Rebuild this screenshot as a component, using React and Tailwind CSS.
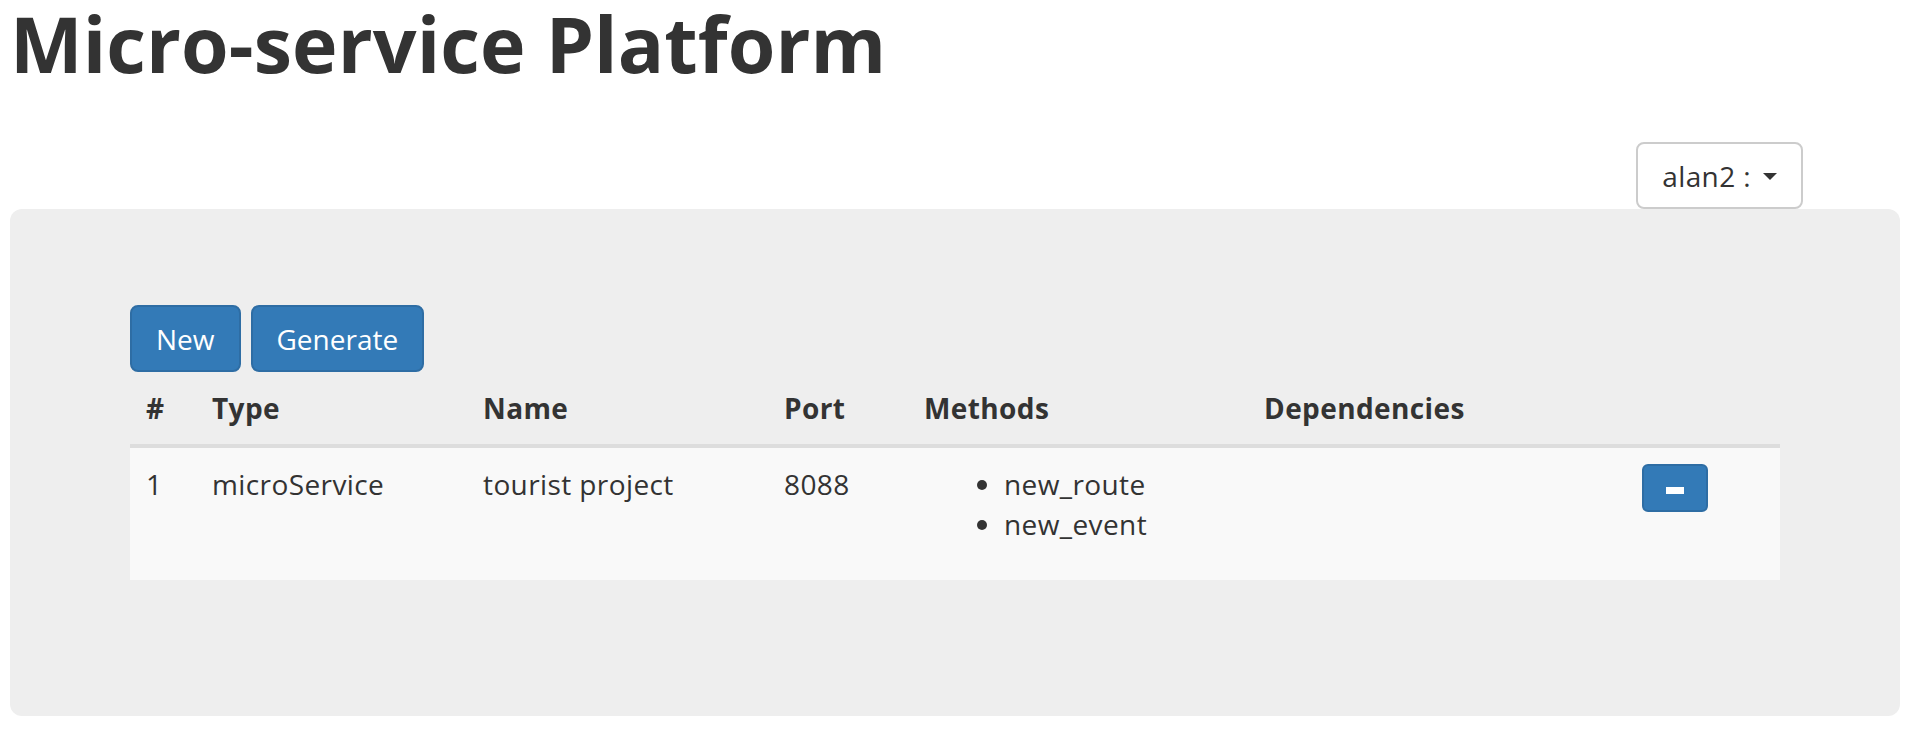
export default function App() {
  const cols = "grid grid-cols-[66px_271px_301px_140px_340px_378px_154px]";
  const blue =
    "flex h-[67px] items-center rounded-[8px] border-2 border-[#2e6da4] bg-[#337ab7] px-[24px] text-[28px] leading-[40px] tracking-normal text-white";
  return (
    <div className="min-h-[730px] bg-white font-['Open_Sans',sans-serif] text-[28px] leading-[40px] tracking-[0.4px] text-[#333]">
      <h1 className="pl-[10px] pt-[1px] text-[77px] font-bold leading-[85px] tracking-[0.1px]">Micro-service Platform</h1>
      <div className="mt-[56px] flex justify-end pr-[120px]">
        <button className="flex h-[67px] items-center rounded-[8px] border-2 border-[#ccc] bg-white px-[24px] text-[28px] leading-[40px] text-[#333]">
          <span>alan2 :</span>
          <span className="ml-[12px] mt-[2px] h-0 w-0 border-x-[7px] border-t-[7px] border-x-transparent border-t-[#333]" />
        </button>
      </div>
      <div className="ml-[10px] w-[1890px] rounded-[12px] bg-[#eee] px-[120px] py-[96px]">
        <div className="flex gap-[10px]">
          <button className={blue}>New</button>
          <button className={blue}>Generate</button>
        </div>
        <div className="mb-[40px] w-[1650px]">
          <div className={`${cols} border-b-4 border-[#ddd] font-bold`}>
            <div className="p-[16px]">#</div>
            <div className="p-[16px]">Type</div>
            <div className="p-[16px]">Name</div>
            <div className="p-[16px]">Port</div>
            <div className="p-[16px]">Methods</div>
            <div className="p-[16px]">Dependencies</div>
            <div className="p-[16px]"></div>
          </div>
          <div className={`${cols} bg-[#f9f9f9]`}>
            <div className="p-[16px]">1</div>
            <div className="p-[16px]">microService</div>
            <div className="p-[16px]">tourist project</div>
            <div className="p-[16px]">8088</div>
            <div className="p-[16px]">
              <ul className="mb-[20px] list-disc pl-[80px]">
                <li>new_route</li>
                <li>new_event</li>
              </ul>
            </div>
            <div className="p-[16px]"></div>
            <div className="p-[16px]">
              <button className="flex h-[48px] w-[66px] items-center justify-center rounded-[6px] border-2 border-[#2e6da4] bg-[#337ab7]">
                <span className="mt-[4px] block h-[7px] w-[18px] bg-white" />
              </button>
            </div>
          </div>
        </div>
      </div>
    </div>
  );
}
